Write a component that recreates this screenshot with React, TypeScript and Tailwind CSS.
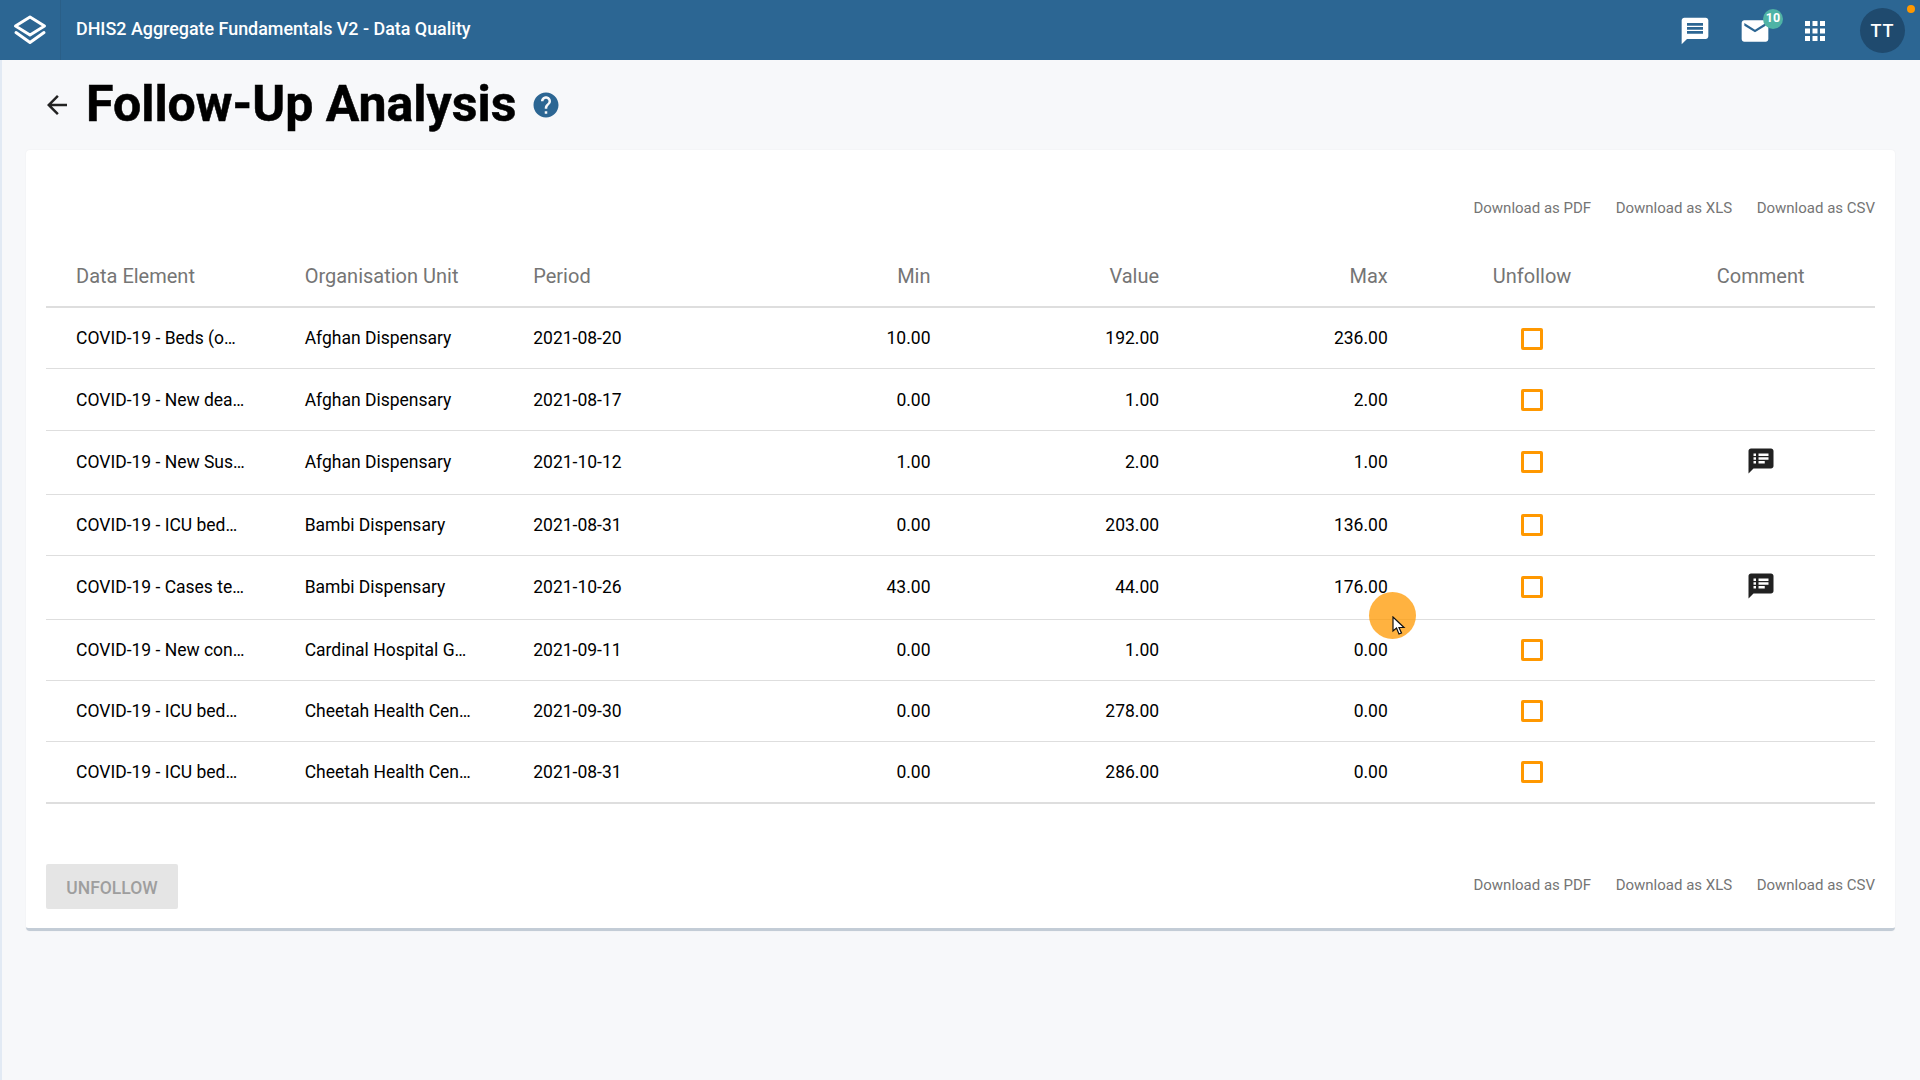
const P = {
  back: "M20 11H7.83l5.59-5.59L12 4l-8 8 8 8 1.41-1.41L7.83 13H20v-2z",
  help: "M12 2C6.48 2 2 6.48 2 12s4.48 10 10 10 10-4.48 10-10S17.52 2 12 2zm1 17h-2v-2h2v2zm2.07-7.75l-.9.92C13.45 12.9 13 13.5 13 15h-2v-.5c0-1.1.45-2.1 1.17-2.83l1.24-1.26c.37-.36.59-.86.59-1.41 0-1.1-.9-2-2-2s-2 .9-2 2H8c0-2.21 1.79-4 4-4s4 1.79 4 4c0 .88-.36 1.68-.93 2.25z",
  msg: "M20 2H4c-1.1 0-1.99.9-1.99 2L2 22l4-4h14c1.1 0 2-.9 2-2V4c0-1.1-.9-2-2-2zm-2 12H6v-2h12v2zm0-3H6V9h12v2zm0-3H6V6h12v2z",
  mail: "M20 4H4c-1.1 0-1.99.9-1.99 2L2 18c0 1.1.9 2 2 2h16c1.1 0 2-.9 2-2V6c0-1.1-.9-2-2-2zm0 4l-8 5-8-5V6l8 5 8-5v2z",
  apps: "M4 8h4V4H4v4zm6 12h4v-4h-4v4zm-6 0h4v-4H4v4zm0-6h4v-4H4v4zm6 0h4v-4h-4v4zm6-10v4h4V4h-4zm-6 4h4V4h-4v4zm6 6h4v-4h-4v4zm0 6h4v-4h-4v4z",
  notes: "M20 2H4c-1.1 0-1.99.9-1.99 2L2 22l4-4h14c1.1 0 2-.9 2-2V4c0-1.1-.9-2-2-2zM8 14H6v-2h2v2zm0-3H6V9h2v2zm0-3H6V6h2v2zm7 6h-5v-2h5v2zm3-3h-8V9h8v2zm0-3h-8V6h8v2z",
};

function Icon({ d, className }: { d: string; className: string }) {
  return (
    <svg viewBox="0 0 24 24" className={className} fill="currentColor">
      <path d={d} />
    </svg>
  );
}

const rows = [
  ["COVID-19 - Beds (o…", "Afghan Dispensary", "2021-08-20", "10.00", "192.00", "236.00", false, "h-[61.5px]"],
  ["COVID-19 - New dea…", "Afghan Dispensary", "2021-08-17", "0.00", "1.00", "2.00", false, "h-[61.5px]"],
  ["COVID-19 - New Sus…", "Afghan Dispensary", "2021-10-12", "1.00", "2.00", "1.00", true, "h-[64px]"],
  ["COVID-19 - ICU bed…", "Bambi Dispensary", "2021-08-31", "0.00", "203.00", "136.00", false, "h-[61.3px]"],
  ["COVID-19 - Cases te…", "Bambi Dispensary", "2021-10-26", "43.00", "44.00", "176.00", true, "h-[64px]"],
  ["COVID-19 - New con…", "Cardinal Hospital G…", "2021-09-11", "0.00", "1.00", "0.00", false, "h-[61px]"],
  ["COVID-19 - ICU bed…", "Cheetah Health Cen…", "2021-09-30", "0.00", "278.00", "0.00", false, "h-[61px]"],
  ["COVID-19 - ICU bed…", "Cheetah Health Cen…", "2021-08-31", "0.00", "286.00", "0.00", false, "h-[61.7px]"],
] as const;

function Downloads() {
  return (
    <div className="flex gap-[24.5px] text-[15px] leading-5 text-[#757575]">
      <span>Download as PDF</span>
      <span>Download as XLS</span>
      <span>Download as CSV</span>
    </div>
  );
}

export default function App() {
  return (
    <div className="relative min-h-[1080px] border-l-2 border-[#e2eaf4] bg-[#f7f8fa] font-['Roboto',sans-serif] text-black">
      <header className="-ml-[2px] flex h-[60px] items-center bg-[#2c6693] text-white">
        <div className="flex h-full w-[61px] items-center justify-center border-r border-[#2a5f88] pr-px">
          <svg viewBox="0 0 40 36" className="h-[36px] w-[40px]" fill="none" stroke="white" strokeWidth="3" strokeLinejoin="round" strokeLinecap="round">
            <path d="M20 5 L34.5 14 L20 23 L5.5 14 Z" />
            <path d="M6 20.5 L20 30.5 L34 20.5" />
          </svg>
        </div>
        <div className="-mt-[2px] ml-[15px] text-[17.9px] font-medium">DHIS2 Aggregate Fundamentals V2 - Data Quality</div>
        <div className="ml-auto flex items-center pt-px">
          <Icon d={P.msg} className="h-[32px] w-[32px]" />
          <div className="relative ml-[28px] h-[32px] w-[32px]">
            <Icon d={P.mail} className="h-[32px] w-[32px]" />
            <span className="absolute -right-[12px] -top-[6px] flex h-5 w-5 items-center justify-center rounded-full bg-[#4fb3a5] text-[12.5px] font-bold">10</span>
          </div>
          <Icon d={P.apps} className="ml-[29px] h-[30px] w-[30px]" />
          <div className="relative ml-[30px] mr-[15px] flex h-[45px] w-[45px] items-center justify-center rounded-full bg-[#1f4a6e] text-[18px] font-medium tracking-[1px]">
            TT
            <span className="absolute -right-[10px] -top-[3px] h-2 w-2 rounded-full bg-[#ff9800]" />
          </div>
        </div>
      </header>

      <div className="flex h-[90px] items-center pl-[40px]">
        <Icon d={P.back} className="h-[30px] w-[30px] text-[#222]" />
        <h1 className="-mt-[2px] ml-[14px] text-[50px] leading-none font-bold [-webkit-text-stroke:0.5px_black]">Follow-Up Analysis</h1>
        <Icon d={P.help} className="ml-[15px] h-[30px] w-[30px] text-[#2c6693]" />
      </div>

      <main className="ml-[24px] flex h-[781px] w-[1869px] flex-col rounded-[4px] border-b-[3px] border-[#c3ccd6] bg-white px-[20px] shadow-[0_0_2px_rgba(0,0,0,0.06)]">
        <div className="flex justify-end pt-[48px]"><Downloads /></div>
        <table className="mt-[20px] w-full table-fixed border-collapse">
          <thead>
            <tr className="h-[69px] border-b-2 border-[#dedede] text-[20px] text-[#757575]">
              <th className="pl-[30px] pt-[8px] text-left font-normal">Data Element</th>
              <th className="pl-[30px] pt-[8px] text-left font-normal">Organisation Unit</th>
              <th className="pl-[30px] pt-[8px] text-left font-normal">Period</th>
              <th className="pr-[30px] pt-[8px] text-right font-normal">Min</th>
              <th className="pr-[30px] pt-[8px] text-right font-normal">Value</th>
              <th className="pr-[30px] pt-[8px] text-right font-normal">Max</th>
              <th className="pt-[8px] text-center font-normal">Unfollow</th>
              <th className="pt-[8px] text-center font-normal">Comment</th>
            </tr>
          </thead>
          <tbody>
            {rows.map((r, i) => {
              const pad = r[6] ? "" : "pt-px";
              return (
                <tr key={i} className={`border-[#dedede] text-[17.5px] ${i === 7 ? "border-b-2" : "border-b"} ${r[7]}`}>
                  <td className={`pl-[30px] ${pad}`}>{r[0]}</td>
                  <td className={`pl-[30px] ${pad}`}>{r[1]}</td>
                  <td className={`pl-[30px] ${pad}`}>{r[2]}</td>
                  <td className={`pr-[30px] text-right ${pad}`}>{r[3]}</td>
                  <td className={`pr-[30px] text-right ${pad}`}>{r[4]}</td>
                  <td className={`pr-[30px] text-right ${pad}`}>{r[5]}</td>
                  <td className={r[6] ? "pb-px" : "pt-px"}>
                    <div className="mx-auto h-[22px] w-[22px] rounded-[2px] border-[3px] border-[#ff9800]" />
                  </td>
                  <td className={r[6] ? "pb-[2px]" : ""}>{r[6] && <Icon d={P.notes} className="mx-auto h-[30px] w-[30px] text-[#212121]" />}</td>
                </tr>
              );
            })}
          </tbody>
        </table>
        <div className="mt-[60px] flex items-start justify-between">
          <button className="flex h-[45px] w-[132px] items-center justify-center rounded-[2px] bg-[#e5e5e5] pt-[3px] text-[17.5px] font-medium text-[#9e9e9e]">UNFOLLOW</button>
          <div className="pt-[11px]"><Downloads /></div>
        </div>
      </main>

      <div className="absolute left-[1367px] top-[592px] h-[47px] w-[47px] rounded-full bg-[#ff9800]/75" />
      <svg viewBox="0 0 14 20" className="absolute left-[1390px] top-[616px] h-[20px] w-[14px]">
        <path d="M1 1 L1 15 L4.5 12 L7 18 L9.5 17 L7 11.5 L12 11.5 Z" fill="white" stroke="#111" strokeWidth="1.2" />
      </svg>
    </div>
  );
}
